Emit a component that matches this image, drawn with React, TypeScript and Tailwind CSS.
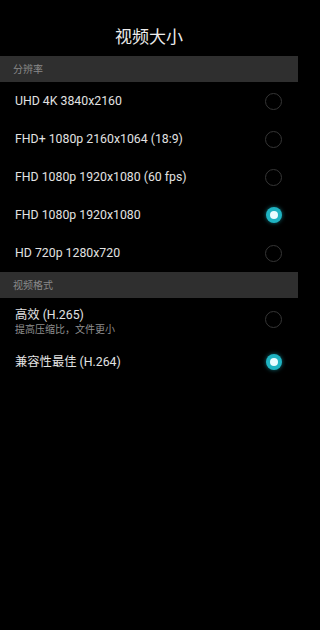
import React from 'react'

type Option = {
  label: string
  sub?: string
  selected?: boolean
}

const resolutions: Option[] = [
  { label: 'UHD 4K 3840x2160' },
  { label: 'FHD+ 1080p 2160x1064 (18:9)' },
  { label: 'FHD 1080p 1920x1080 (60 fps)' },
  { label: 'FHD 1080p 1920x1080', selected: true },
  { label: 'HD 720p 1280x720' },
]

const formats: Option[] = [
  { label: '高效 (H.265)', sub: '提高压缩比，文件更小' },
  { label: '兼容性最佳 (H.264)', selected: true },
]

function Radio({ on }: { on?: boolean }) {
  if (on) {
    return (
      <div className="w-[16px] h-[16px] rounded-full bg-[#1fb3c2] flex items-center justify-center shadow-[0_0_4px_rgba(31,179,194,0.6)]">
        <div className="w-[8px] h-[8px] rounded-full bg-[#eafcff]" />
      </div>
    )
  }
  return <div className="w-[17px] h-[17px] rounded-full border-[1.5px] border-[#363636]" />
}

function SectionHeader({ title }: { title: string }) {
  return (
    <div className="h-[26px] bg-[#2f2f2f] flex items-center px-[13px] text-[10px] text-[#8a8a8a]">
      {title}
    </div>
  )
}

function Row({ opt }: { opt: Option }) {
  return (
    <div className={`flex items-center justify-between pl-[15px] pr-[16px] ${opt.sub ? 'h-[45px]' : 'h-[38px]'}`}>
      <div className={`flex flex-col ${opt.sub ? 'pt-[1px]' : ''}`}>
        <span className="text-[12.3px] text-[#e2e2e2] leading-[16px]">{opt.label}</span>
        {opt.sub && <span className="text-[10px] text-[#8f8f8f] leading-[13px]">{opt.sub}</span>}
      </div>
      <div className={opt.sub ? 'mb-[3px]' : ''}>
        <Radio on={opt.selected} />
      </div>
    </div>
  )
}

export default function App() {
  return (
    <div className="w-full min-h-screen bg-black">
      <div
        className="w-[298px] h-[630px] bg-black overflow-hidden"
        style={{ fontFamily: 'Roboto, "Noto Sans CJK SC", sans-serif' }}
      >
        <div className="h-[56px] flex items-end justify-center pb-[6px]">
          <span className="text-[17px] text-[#ececec]">视频大小</span>
        </div>
        <SectionHeader title="分辨率" />
        {resolutions.map((r) => (
          <Row key={r.label} opt={r} />
        ))}
        <SectionHeader title="视频格式" />
        {formats.map((f) => (
          <Row key={f.label} opt={f} />
        ))}
      </div>
    </div>
  )
}
